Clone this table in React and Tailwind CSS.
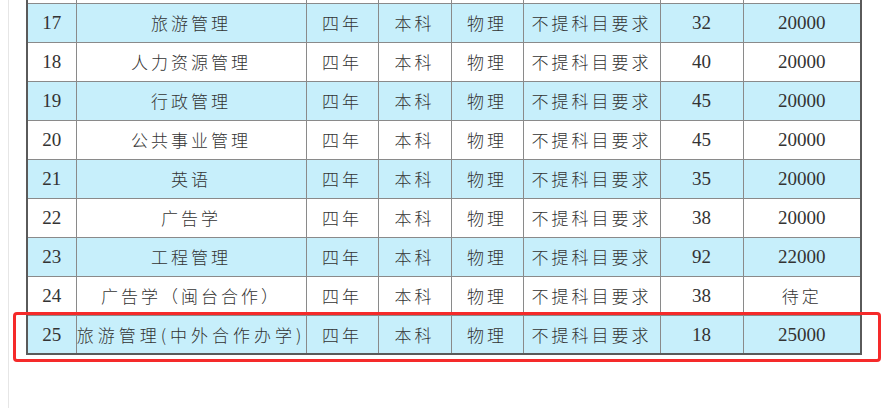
import React from 'react'

const rows = [
  ['', '', '', '', '', '', '', ''],
  ['17', '旅游管理', '四年', '本科', '物理', '不提科目要求', '32', '20000'],
  ['18', '人力资源管理', '四年', '本科', '物理', '不提科目要求', '40', '20000'],
  ['19', '行政管理', '四年', '本科', '物理', '不提科目要求', '45', '20000'],
  ['20', '公共事业管理', '四年', '本科', '物理', '不提科目要求', '45', '20000'],
  ['21', '英语', '四年', '本科', '物理', '不提科目要求', '35', '20000'],
  ['22', '广告学', '四年', '本科', '物理', '不提科目要求', '38', '20000'],
  ['23', '工程管理', '四年', '本科', '物理', '不提科目要求', '92', '22000'],
  ['24', '广告学（闽台合作）', '四年', '本科', '物理', '不提科目要求', '38', '待定'],
  ['25', '旅游管理(中外合作办学)', '四年', '本科', '物理', '不提科目要求', '18', '25000'],
]

const widths = [49, 230, 72, 73, 72, 137, 83, 118]

function isNumeric(text) {
  return /^\d+$/.test(text)
}

function App() {
  return (
    <div className="relative h-[408px] w-[883px] overflow-hidden bg-white">
      <div className="ml-[8px] h-full border-l border-[#e6e6e6]">
        <div className="overflow-hidden pl-[17px]">
          <table className="-mt-[37px] table-fixed border-collapse border-2 border-[#5a5a5a] text-[#333]">
            <colgroup>
              {widths.map((w, i) => (
                <col key={i} style={{ width: w }} />
              ))}
            </colgroup>
            <tbody>
              {rows.map((row, r) => (
                <tr key={r} className={r % 2 === 1 ? 'bg-[#c7effb]' : 'bg-white'}>
                  {row.map((cell, c) => (
                    <td
                      key={c}
                      className={
                        'h-[39px] border border-[#8a8a8a] p-0 text-center leading-none ' +
                        (isNumeric(cell)
                          ? "font-['Liberation_Serif',serif] text-[19px]"
                          : c === 1 && r === 9
                            ? "font-['Noto_Sans_CJK_SC',sans-serif] text-[17px] font-light tracking-[4px]"
                            : "font-['Noto_Sans_CJK_SC',sans-serif] text-[17px] font-light tracking-[3px]")
                      }
                    >
                      {cell}
                    </td>
                  ))}
                </tr>
              ))}
            </tbody>
          </table>
        </div>
      </div>
      <div className="pointer-events-none absolute left-[13px] top-[312px] h-[50px] w-[868px] rounded-[4px] border-[3px] border-[#f52a2a]" />
    </div>
  )
}

export default App
